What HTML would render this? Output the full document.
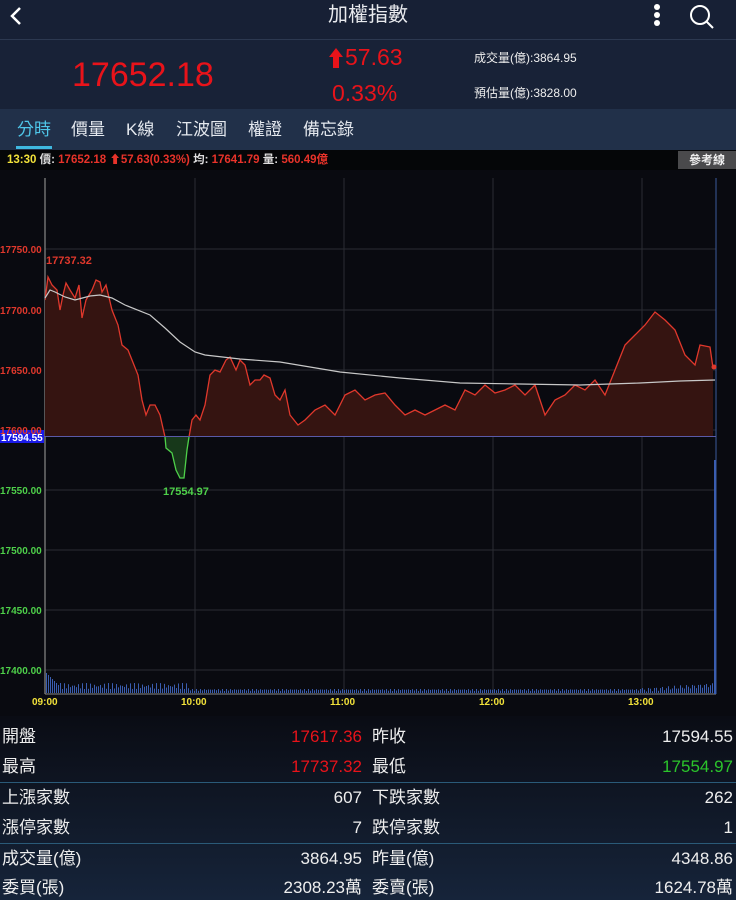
<!DOCTYPE html><html><head><meta charset="utf-8"><style>
body{margin:0;width:736px;height:900px;overflow:hidden;background:#090a10;font-family:"Liberation Sans","Noto Sans CJK TC",sans-serif;color:#fff;position:relative}
.a{position:absolute;white-space:nowrap}
.tb{position:absolute;left:0;top:0;width:736px;height:39px;background:#172035;border-bottom:1px solid #2c3850}
.info{position:absolute;left:0;top:40px;width:736px;height:69px;background:#182237}
.tabs{position:absolute;left:0;top:109px;width:736px;height:41px;background:#213049}
.tab{position:absolute;top:120px;font-size:17px;color:#e4e8ee;line-height:20px}
.bar{position:absolute;left:0;top:150px;width:736px;height:20px;background:#050608;font-size:11.5px;font-weight:bold}
.bot{position:absolute;left:0;top:716px;width:736px;height:184px;background:linear-gradient(#0a0c14,#16243a)}
.r{position:absolute;font-size:17px;color:#eee;line-height:20px;height:20px;white-space:nowrap}
.sep{position:absolute;left:0;width:736px;height:1px;background:#2a5a78}
</style></head><body>
<div class="tb"></div>
<svg class="a" style="left:8px;top:5px" width="16" height="22"><path d="M12 3 L4 11 L12 19" stroke="#fff" stroke-width="2.5" fill="none"/></svg>
<div class="a" style="left:0;width:736px;text-align:center;top:3px;font-size:20px;line-height:24px;color:#e8eaee">加權指數</div>
<div class="a" style="left:654px;top:4px;width:6px;height:6px;border-radius:3px;background:#fff"></div>
<div class="a" style="left:654px;top:12px;width:6px;height:6px;border-radius:3px;background:#fff"></div>
<div class="a" style="left:654px;top:20px;width:6px;height:6px;border-radius:3px;background:#fff"></div>
<svg class="a" style="left:688px;top:3px" width="28" height="28"><circle cx="12" cy="12" r="9" stroke="#fff" stroke-width="2" fill="none"/><path d="M18.5 18.5 L25 25" stroke="#fff" stroke-width="2"/></svg>
<div class="info"></div>
<div class="a" style="left:72px;top:56px;font-size:34px;color:#e8131a">17652.18</div>
<svg class="a" style="left:328px;top:47px" width="16" height="22"><path d="M8 1 L15 10 L11 10 L11 21 L5 21 L5 10 L1 10Z" fill="#e8131a"/></svg>
<div class="a" style="left:345px;top:44px;font-size:23px;color:#e8131a">57.63</div>
<div class="a" style="left:332px;top:80px;font-size:23px;color:#e8131a">0.33%</div>
<div class="a" style="left:474px;top:51px;font-size:12px;line-height:14px;color:#eee">成交量(億):3864.95</div>
<div class="a" style="left:474px;top:86px;font-size:12px;line-height:14px;color:#eee">預估量(億):3828.00</div>
<div class="tabs"></div>
<div class="tab" style="left:17px;color:#4fc7ea">分時</div>
<div class="a" style="left:16px;top:146px;width:36px;height:3px;background:#3fb8e0"></div>
<div class="tab" style="left:71px">價量</div>
<div class="tab" style="left:126px">K線</div>
<div class="tab" style="left:176px">江波圖</div>
<div class="tab" style="left:248px">權證</div>
<div class="tab" style="left:303px">備忘錄</div>
<div class="bar"><span class="a" style="left:7px;top:3px;line-height:14px"><span style="color:#f2e23a">13:30</span> <span style="color:#ddd">價:</span><span style="color:#e8332a"> 17652.18 ⬆57.63(0.33%)</span> <span style="color:#ddd">均:</span><span style="color:#e8332a"> 17641.79</span> <span style="color:#ddd">量:</span><span style="color:#e8332a"> 560.49億</span></span>
<span class="a" style="left:678px;top:1px;width:58px;height:18px;background:#4a4a4c;color:#eee;text-align:center;line-height:18px;font-size:12px">參考線</span></div>
<svg class="a" style="left:0;top:170px" width="736" height="546" viewBox="0 170 736 546" id="ch">
<defs><clipPath id="up"><rect x="45" y="170" width="672" height="266.5"/></clipPath><clipPath id="dn"><rect x="45" y="436.5" width="672" height="100"/></clipPath></defs>
<g stroke="#2a2c33" stroke-width="1">
<line x1="45" y1="249" x2="716" y2="249"/><line x1="45" y1="310" x2="716" y2="310"/><line x1="45" y1="370" x2="716" y2="370"/><line x1="45" y1="430" x2="716" y2="430"/><line x1="45" y1="490" x2="716" y2="490"/><line x1="45" y1="550" x2="716" y2="550"/><line x1="45" y1="610" x2="716" y2="610"/><line x1="45" y1="670" x2="716" y2="670"/>
<line x1="195" y1="178" x2="195" y2="693"/><line x1="344" y1="178" x2="344" y2="693"/><line x1="493" y1="178" x2="493" y2="693"/><line x1="642" y1="178" x2="642" y2="693"/></g>
<line x1="45" y1="178" x2="45" y2="694" stroke="#888" stroke-width="1.2"/>
<line x1="716" y1="178" x2="716" y2="694" stroke="#3a5a9a" stroke-width="1"/>
<line x1="45" y1="694" x2="716" y2="694" stroke="#888" stroke-width="1"/>
<g id="vol" fill="#3a5db0"></g>
<path id="fu" clip-path="url(#up)" fill="#351411"/>
<path id="fd" clip-path="url(#dn)" fill="#17381a"/>
<path id="lu" clip-path="url(#up)" fill="none" stroke="#e0382c" stroke-width="1.3"/>
<path id="ld" clip-path="url(#dn)" fill="none" stroke="#4ed04a" stroke-width="1.3"/>
<line x1="0" y1="436.5" x2="716" y2="436.5" stroke="#5a5aa8" stroke-width="1"/>
<polyline fill="none" stroke="#c8c8c8" stroke-width="1.2" points="45,298 50,290 55,292 65,297 75,300 90,296 100,295 112,298 125,305 150,315 165,328 180,342 195,352 205,355 240,359 280,362 340,372 400,378 460,383 520,384 580,385 640,383 680,381 715,380"/>
<rect x="0" y="430" width="44" height="13" fill="#1a1ae8"/>
<g font-size="10" font-weight="bold" font-family="Liberation Sans,sans-serif">
<text x="0" y="253" fill="#e0382c">17750.00</text><text x="0" y="314" fill="#e0382c">17700.00</text><text x="0" y="374" fill="#e0382c">17650.00</text><text x="0" y="434" fill="#e0382c">17600.00</text>
<text x="1" y="441" fill="#fff">17594.55</text>
<text x="0" y="494" fill="#4ed04a">17550.00</text><text x="0" y="554" fill="#4ed04a">17500.00</text><text x="0" y="614" fill="#4ed04a">17450.00</text><text x="0" y="674" fill="#4ed04a">17400.00</text>
<text x="46" y="264" fill="#e0382c" font-size="11">17737.32</text>
<text x="163" y="495" fill="#4ed04a" font-size="11">17554.97</text>
<text x="32" y="705" fill="#f2e23a">09:00</text><text x="181" y="705" fill="#f2e23a">10:00</text><text x="330" y="705" fill="#f2e23a">11:00</text><text x="479" y="705" fill="#f2e23a">12:00</text><text x="628" y="705" fill="#f2e23a">13:00</text></g>
<circle cx="714" cy="367" r="2.5" fill="#e0382c"/>
<rect x="714" y="460" width="2" height="234" fill="#3a5db0"/>
</svg>
<div class="bot"></div>
<div class="r" style="left:2px;top:727px">開盤</div><div class="r" style="right:374px;top:727px;color:#e8131a">17617.36</div><div class="r" style="left:372px;top:727px">昨收</div><div class="r" style="right:3px;top:727px">17594.55</div>
<div class="r" style="left:2px;top:757px">最高</div><div class="r" style="right:374px;top:757px;color:#e8131a">17737.32</div><div class="r" style="left:372px;top:757px">最低</div><div class="r" style="right:3px;top:757px;color:#2bc42b">17554.97</div>
<div class="sep" style="top:782px"></div>
<div class="r" style="left:2px;top:788px">上漲家數</div><div class="r" style="right:374px;top:788px">607</div><div class="r" style="left:372px;top:788px">下跌家數</div><div class="r" style="right:3px;top:788px">262</div>
<div class="r" style="left:2px;top:818px">漲停家數</div><div class="r" style="right:374px;top:818px">7</div><div class="r" style="left:372px;top:818px">跌停家數</div><div class="r" style="right:3px;top:818px">1</div>
<div class="sep" style="top:843px"></div>
<div class="r" style="left:2px;top:849px">成交量(億)</div><div class="r" style="right:374px;top:849px">3864.95</div><div class="r" style="left:372px;top:849px">昨量(億)</div><div class="r" style="right:3px;top:849px">4348.86</div>
<div class="r" style="left:2px;top:878px">委買(張)</div><div class="r" style="right:374px;top:878px">2308.23萬</div><div class="r" style="left:372px;top:878px">委賣(張)</div><div class="r" style="right:3px;top:878px">1624.78萬</div>
<script>
var p=[[45,300],[48,277],[52,285],[57,290],[60,310],[63,295],[66,283],[70,290],[75,298],[79,285],[82,318],[86,300],[92,290],[96,280],[100,282],[102,292],[106,285],[112,310],[118,325],[122,345],[128,350],[132,360],[138,375],[142,400],[146,415],[150,405],[155,405],[160,415],[165,437],[166,448],[172,453],[176,470],[180,478],[184,478],[187,450],[189,437],[192,420],[196,415],[200,420],[205,405],[210,375],[215,370],[220,372],[226,360],[230,357],[236,370],[240,360],[245,365],[250,385],[255,380],[260,380],[264,375],[270,378],[275,395],[280,400],[285,390],[290,415],[298,425],[305,420],[315,410],[325,405],[335,415],[345,395],[355,390],[365,400],[375,395],[385,393],[395,405],[405,415],[415,410],[425,415],[435,410],[445,405],[455,410],[465,390],[475,395],[485,385],[495,393],[505,390],[515,385],[525,395],[535,385],[545,415],[555,400],[565,395],[575,385],[585,390],[595,380],[605,395],[615,370],[625,345],[635,335],[645,325],[655,312],[665,320],[675,330],[685,355],[695,365],[700,345],[710,347],[713,368]];
var s=p.map(function(q,i){return(i?'L':'M')+q[0]+' '+q[1]}).join(' ');
var f=s+' L713 436.5 L45 436.5Z';
['fu','fd'].forEach(function(i){document.getElementById(i).setAttribute('d',f)});
['lu','ld'].forEach(function(i){document.getElementById(i).setAttribute('d',s)});
var g=document.getElementById('vol'),h='';
for(var x=46;x<713;x+=2){var v=x<60?20-(x-46):(x<190?7+3*Math.sin(x*1.7):2+2*Math.abs(Math.sin(x*2.3)));if(x>640)v=3+5*(x-640)/73+2*Math.sin(x);v=Math.max(1,v);h+='<rect x="'+x+'" y="'+(693-v)+'" width="1" height="'+v+'"/>';}
g.innerHTML=h;
</script>
</body></html>
